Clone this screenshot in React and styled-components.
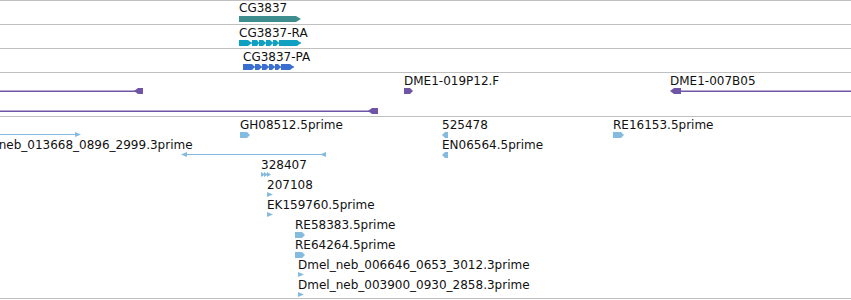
import React from 'react';
import styled, { createGlobalStyle } from 'styled-components';

// track colours
const TEAL = '#3f8e8f';
const CYAN = '#10a0c2';
const BLUE = '#3a6fd0';
const PURPLE = '#7054a5';
const EST = '#86bbe0';

const GlobalStyle = createGlobalStyle`
  html, body {
    margin: 0;
    padding: 0;
    background: #fff;
  }
  body {
    font-family: 'DejaVu Sans', 'Liberation Sans', sans-serif;
    overflow: hidden;
  }
`;

// shape helpers, all in glyph-local coordinates (6px tall)
const rightBlock = (x0, x1, tip = 3) =>
  `${x0},0 ${x1 - tip},0 ${x1},3 ${x1 - tip},6 ${x0},6`;
const leftBlock = (x0, x1, tip = 3) =>
  `${x0},3 ${x0 + tip},0 ${x1},0 ${x1},6 ${x0 + tip},6`;
const rightTri = (x0, x1, y0 = 0, y1 = 6) =>
  `${x0},${y0} ${x1},${(y0 + y1) / 2} ${x0},${y1}`;
const leftTri = (x0, x1, y0 = 0, y1 = 6) =>
  `${x1},${y0} ${x0},${(y0 + y1) / 2} ${x1},${y1}`;

// exons with little strand chevrons sitting in the introns
const transcript = (exons, width) => {
  const shapes = [{ line: [0, width, 2.5, 1] }];
  exons.forEach(([s, e], i) => {
    if (i === exons.length - 1) {
      shapes.push({ poly: rightBlock(s, e, 4) });
    } else {
      shapes.push({ poly: `${s},0 ${e},0 ${e},6 ${s},6` });
      shapes.push({ poly: rightTri(e, exons[i + 1][0]) });
    }
  });
  return shapes;
};

const tracks = [
  {
    height: 23,
    color: TEAL,
    features: [
      { x: 239, row: 0, offset: 0, gap: 1, label: 'CG3837', w: 62, shapes: [{ poly: rightBlock(0, 62, 5) }] },
    ],
  },
  {
    height: 23,
    color: CYAN,
    features: [
      {
        x: 239, row: 0, label: 'CG3837-RA', w: 62,
        shapes: transcript([[0, 9], [13, 18], [20, 24], [27, 31], [34, 37], [40, 62]], 62),
      },
    ],
  },
  {
    height: 23,
    color: BLUE,
    features: [
      {
        x: 243, row: 0, label: 'CG3837-PA', w: 51,
        shapes: transcript([[0, 9], [12, 16], [19, 23], [26, 29], [32, 35], [38, 51]], 51),
      },
    ],
  },
  {
    height: 43,
    color: PURPLE,
    features: [
      { x: 0, row: 0, w: 143, shapes: [{ line: [0, 136, 2.5, 1.5] }, { poly: leftBlock(134, 143, 4) }] },
      { x: 404, row: 0, label: 'DME1-019P12.F', w: 9, shapes: [{ poly: rightBlock(0, 9, 3) }] },
      { x: 670, row: 0, label: 'DME1-007B05', w: 181, shapes: [{ poly: leftBlock(0, 11, 4) }, { line: [10, 181, 2.5, 1.5] }] },
      { x: 0, row: 1, w: 378, shapes: [{ line: [0, 370, 2.5, 1.5] }, { poly: leftBlock(368, 378, 4) }] },
    ],
  },
  {
    height: 181,
    color: EST,
    features: [
      { x: 0, row: 0, w: 81, shapes: [{ line: [0, 77, 2, 1] }, { poly: rightTri(75, 81, 0, 5) }] },
      { x: 240, row: 0, label: 'GH08512.5prime', w: 10, shapes: [{ poly: rightBlock(0, 10) }] },
      { x: 442, row: 0, label: '525478', w: 6, shapes: [{ poly: leftBlock(0, 6, 3) }] },
      { x: 613, row: 0, label: 'RE16153.5prime', w: 11, shapes: [{ poly: rightBlock(0, 11) }] },
      { x: -39, row: 1, label: 'Dmel_neb_013668_0896_2999.3prime', w: 1, shapes: [] },
      {
        x: 181, row: 1, w: 145,
        shapes: [{ poly: leftTri(0, 6, 0, 5) }, { line: [3, 142, 2, 1] }, { poly: leftTri(139, 145, 0, 5) }],
      },
      { x: 442, row: 1, label: 'EN06564.5prime', w: 6, shapes: [{ poly: leftBlock(0, 6, 3) }] },
      {
        x: 261, row: 2, label: '328407', w: 10,
        shapes: [{ poly: rightTri(0, 4, 0, 5) }, { poly: rightTri(3, 7, 0, 5) }, { poly: rightTri(6, 10, 0, 5) }],
      },
      { x: 267, row: 3, label: '207108', w: 6, shapes: [{ poly: rightTri(0, 6, 0, 5) }] },
      { x: 267, row: 4, label: 'EK159760.5prime', w: 6, shapes: [{ poly: rightTri(0, 6, 0, 5) }] },
      { x: 295, row: 5, label: 'RE58383.5prime', w: 10, shapes: [{ poly: rightBlock(0, 10) }] },
      { x: 295, row: 6, label: 'RE64264.5prime', w: 10, shapes: [{ poly: rightBlock(0, 10) }] },
      { x: 298, row: 7, label: 'Dmel_neb_006646_0653_3012.3prime', w: 6, shapes: [{ poly: rightTri(0, 6, 0, 5) }] },
      { x: 298, row: 8, label: 'Dmel_neb_003900_0930_2858.3prime', w: 6, shapes: [{ poly: rightTri(0, 6, 0, 5) }] },
    ],
  },
];

const Browser = styled.div`
  width: 851px;
  height: 300px;
  overflow: hidden;
  display: flex;
  flex-direction: column;
  background: #fff;
`;

const Track = styled.div`
  position: relative;
  flex-shrink: 0;
  height: ${(p) => p.$height}px;
  border-top: 1px solid #c0c0c0;
  overflow: hidden;
  &:last-child {
    border-bottom: 1px solid #c0c0c0;
  }
`;

// a feature sits on the track canvas at its genomic position
const Feature = styled.div`
  position: absolute;
  left: ${(p) => p.$x}px;
  top: ${(p) => p.$offset + p.$row * 20}px;
  display: flex;
  flex-direction: column;
  align-items: flex-start;
`;

const Label = styled.span`
  display: block;
  height: 14px;
  line-height: 14px;
  font-size: 12px;
  color: #111;
  white-space: nowrap;
`;

const GlyphSvg = styled.svg`
  display: block;
  overflow: visible;
  margin-top: ${(p) => p.$gap}px;
`;

const Glyph = ({ width, color, gap, shapes }) => (
  <GlyphSvg width={width} height={6} viewBox={`0 0 ${width} 6`} $gap={gap}>
    {shapes.map((s, i) =>
      s.line ? (
        <rect key={i} x={s.line[0]} y={s.line[2]} width={s.line[1] - s.line[0]} height={s.line[3]} fill={color} />
      ) : (
        <polygon key={i} points={s.poly} fill={color} />
      )
    )}
  </GlyphSvg>
);

const App = () => {
  return (
    <>
      <GlobalStyle />
      <Browser>
        {tracks.map((track, t) => (
          <Track key={t} $height={track.height}>
            {track.features.map((f, i) => (
              <Feature key={i} $x={f.x} $row={f.row} $offset={f.offset ?? 1}>
                <Label>{f.label || ''}</Label>
                <Glyph width={f.w} color={track.color} gap={f.gap || 0} shapes={f.shapes} />
              </Feature>
            ))}
          </Track>
        ))}
      </Browser>
    </>
  );
};

export default App;
